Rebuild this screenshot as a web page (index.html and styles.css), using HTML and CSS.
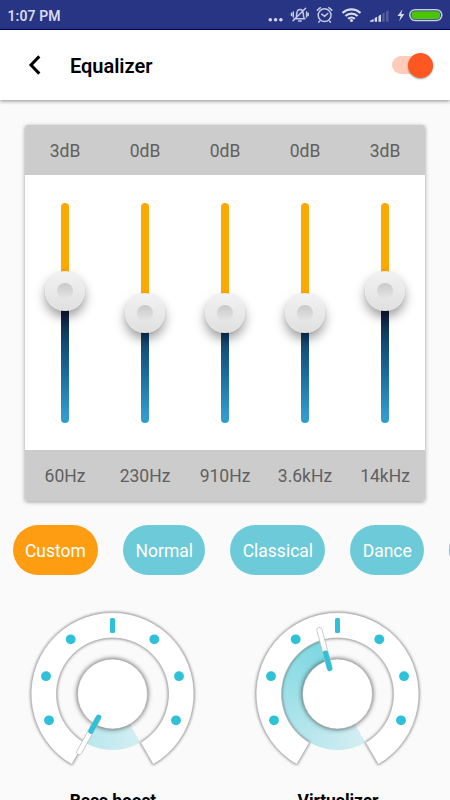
FILE: index.html
```html
<!DOCTYPE html>
<html lang="en">
<head>
<meta charset="utf-8">
<title>Equalizer</title>
<link rel="stylesheet" href="styles.css">
</head>
<body>
<div class="screen">
  <div class="status">
    <span class="time">1:07 PM</span>
    <svg class="status-icons" width="184" height="30" viewBox="266 0 184 30">
      <g fill="#d3d6ea"><circle cx="270.3" cy="19.8" r="1.8"/><circle cx="275.6" cy="19.8" r="1.8"/><circle cx="280.9" cy="19.8" r="1.8"/></g>
      <g fill="none" stroke="#c5c9e5" stroke-width="1.5" stroke-linecap="round">
        <path d="M294.2 18.8h10.8M295.7 18.5c1.1-1.5.8-3.5 1.1-5.4.3-2.3 1.5-3.6 3.2-3.6s3 1.3 3.2 3.6c.2 2 .1 3.9 1.2 5.4M298.6 21h2.6M293 20.7l12.6-12.4M293.3 12v5M306.6 12v5M291.5 13.3v2.3M308.2 13.3v2.3"/>
        <circle cx="324.6" cy="15.2" r="6.4" stroke-width="1.5"/>
        <path d="M321.7 14.2l2.9 2.2 3.2-2.9M317.4 10.2l3-2.5M331.8 10.2l-3-2.5M319.6 21.2l-.8.9M329.6 21.2l.8.9"/>
      </g>
      <g fill="none" stroke="#d7daee" stroke-width="2.2">
        <path d="M342.5 13c5.2-4.9 12.8-4.9 18 0M345.4 16c3.5-3.3 8.7-3.3 12.2 0M348.2 18.9c1.9-1.8 4.7-1.8 6.6 0"/>
      </g>
      <circle cx="351.5" cy="20.6" r="1.5" fill="#d7daee"/>
      <g fill="#dadced"><path d="M370 21.8v-1.1l3.6-1.6v2.7zM374.7 21.8v-3.9l2.4-1.2v5.1zM378.5 21.8v-5.8l2.5-1.4v7.2z"/><path opacity=".25" d="M382.2 21.8v-8.1l2.4-1.4v9.5zM386 21.8v-10.3l2.5-1.4v11.7z"/></g>
      <path d="M402.5 9.3l-5 6.7h3.1l-1.4 5.3 5.2-7.2h-3.2z" fill="#d7daee"/>
      <rect x="409.8" y="9.7" width="32" height="10.8" rx="5.4" fill="none" stroke="#c7cce5" stroke-width="1.5"/>
      <rect x="411.4" y="11.3" width="28.8" height="7.6" rx="3.5" fill="#4bc500"/>
    </svg>
  </div>
  <header class="bar">
    <svg class="back" width="14" height="20" viewBox="0 0 14 20"><path d="M12.3 1.4L4 10l8.3 8.6" fill="none" stroke="#000" stroke-width="3"/></svg>
    <h1>Equalizer</h1>
    <div class="switch"><span class="knob"></span></div>
  </header>
  <main>
    <section class="card">
      <div class="labels"><span>3dB</span><span>0dB</span><span>0dB</span><span>0dB</span><span>3dB</span></div>
      <div class="sliders">
        <div class="slider high"><i class="track"></i><i class="thumb"></i></div>
        <div class="slider"><i class="track"></i><i class="thumb"></i></div>
        <div class="slider"><i class="track"></i><i class="thumb"></i></div>
        <div class="slider"><i class="track"></i><i class="thumb"></i></div>
        <div class="slider high"><i class="track"></i><i class="thumb"></i></div>
      </div>
      <div class="labels"><span>60Hz</span><span>230Hz</span><span>910Hz</span><span>3.6kHz</span><span>14kHz</span></div>
    </section>
    <nav class="chips">
      <span class="chip on">Custom</span><span class="chip">Normal</span><span class="chip">Classical</span><span class="chip">Dance</span><span class="chip next"></span>
    </nav>
    <section class="dials">
      <figure>
        <div class="dial">
          <div class="fan low"></div>
          <svg width="180" height="180" viewBox="-90.5 -90 180 180">
            <defs>
              <g id="face">
                <path class="ring" d="M-40.75 70.58A81.5 81.5 0 1 1 40.75 70.58L28 48.5A56 56 0 1 0-28 48.5Z"/>
                <circle class="hub" r="35"/>
                <g fill="#2fc1d8"><circle cx="-41.8" cy="-54.7" r="4.9"/><circle cx="-66.5" cy="-17.8" r="4.9"/><circle cx="-63.5" cy="26.3" r="4.9"/><circle cx="41.8" cy="-54.7" r="4.9"/><circle cx="66.5" cy="-17.8" r="4.9"/><circle cx="63.5" cy="26.3" r="4.9"/><rect x="-2.5" y="-76" width="5" height="15" rx="1.5"/></g>
              </g>
              <g id="needle">
                <rect class="arm" x="-2.6" y="-1" width="5.2" height="44" rx="2.6"/>
                <rect x="-2.6" y="23" width="5.2" height="21" rx="2" fill="#2fc1d8"/>
              </g>
            </defs>
            <use href="#face"/>
            <use href="#needle" transform="translate(-34 59.5) rotate(209)"/>
          </svg>
        </div>
        <figcaption>Bass boost</figcaption>
      </figure>
      <figure>
        <div class="dial">
          <div class="fan mid"></div>
          <svg width="180" height="180" viewBox="-90.5 -90 180 180">
            <use href="#face"/>
            <use href="#needle" transform="translate(-18.5 -65.5) rotate(-15)"/>
          </svg>
        </div>
        <figcaption>Virtualizer</figcaption>
      </figure>
    </section>
  </main>
</div>
</body>
</html>
```
FILE: styles.css
```css
* { box-sizing: border-box; }
body { margin: 0; background: #fafafa; font-family: Roboto, sans-serif; }
.screen { width: 450px; height: 800px; overflow: hidden; }
.status { height: 30px; display: flex; justify-content: space-between; align-items: center; background: #273584; border-bottom: 1px solid #00006b; color: #d7daee; }
.time { padding: 2px 0 0 7.5px; font-size: 14px; font-weight: 600; letter-spacing: .1px; }
.status-icons { display: block; }
.bar { height: 70px; display: flex; align-items: center; background: #fff; box-shadow: 0 1px 4px rgba(0,0,0,.45); padding: 0 17px 0 27px; }
.back { display: block; }
h1 { margin: 2px auto 0 29px; font-size: 20px; line-height: 24px; font-weight: 600; letter-spacing: -.03px; color: #000; }
.switch { width: 41px; height: 18px; border-radius: 9px; background: #ffccbc; display: flex; justify-content: flex-end; align-items: center; }
.knob { flex: none; width: 25px; height: 25px; border-radius: 50%; background: #ff5722; box-shadow: 0 1px 2px rgba(0,0,0,.4); }
.card { width: 400px; height: 376px; margin: 25px auto 0; border-radius: 2.5px; overflow: hidden; background: #fff; box-shadow: 0 1px 4px rgba(0,0,0,.38); }
.labels { height: 50px; display: grid; grid-template-columns: repeat(5, 1fr); align-items: center; text-align: center; background: #ccc; color: #606060; font-size: 17.5px; padding-top: 2px; }
.labels:last-child { height: 51px; padding-top: 0; }
.sliders { height: 275px; padding-top: 27.5px; display: grid; grid-template-columns: repeat(5, 1fr); }
.slider { --pos: 110px; position: relative; height: 220px; display: flex; justify-content: center; }
.high { --pos: 88px; }
.track { width: 7.6px; height: 220px; border-radius: 4px; background: linear-gradient(#ffa800 var(--pos), transparent var(--pos)), linear-gradient(#0c1330 46%, #11294b 54%, #124b73 64%, #1c6f9e 79%, #3299cc 96%); }
.thumb { position: absolute; left: calc(50% - 20px); top: calc(var(--pos) - 19.5px); width: 40px; height: 40px; border-radius: 50%; background: linear-gradient(#f2f2f2, #e0e0e0); box-shadow: 0 6px 11px rgba(0,0,0,.38), 0 0 1px rgba(0,0,0,.12); display: grid; place-items: center; }
.thumb::after { content: ""; width: 16px; height: 16px; border-radius: 50%; background: linear-gradient(#c9c9c9, #e5e5e5); }
.chips { display: flex; gap: 25px; margin: 24px 0 0 12.7px; }
.chip { flex: none; height: 50px; line-height: 52px; padding: 0 12.3px; border-radius: 25px; background: #6dcad9; color: #fff; font-size: 17.5px; }
.on { background: #ff9d12; }
.next { width: 70px; }
.dials { display: grid; grid-template-columns: 225px 225px; margin-top: 28.6px; }
figure { margin: 0; display: flex; flex-direction: column; align-items: center; }
.dial { display: grid; place-items: center; width: 180px; height: 180px; margin-left: -1px; }
.dial > * { grid-area: 1 / 1; }
.dial svg { display: block; overflow: visible; position: relative; }
.fan { width: 112px; height: 112px; border-radius: 50%; transform: translateX(.5px); }
.low { background: conic-gradient(from 150deg, #d3eef2, #b9e7ed 60deg, transparent 60deg); }
.mid { background: conic-gradient(from 150deg, #d3eef2, #b9e7ed 60deg, #7dd7e1 194deg, transparent 194deg); }
.ring { fill: #fff; stroke: #b5b5b5; stroke-width: .8; filter: drop-shadow(0 0 1.5px rgba(0,0,0,.5)); }
.hub { fill: #fff; stroke: #aaa; stroke-width: .6; filter: drop-shadow(0 .5px 2.5px rgba(0,0,0,.65)); }
.arm { fill: #fff; stroke: #bbb; stroke-width: .7; }
figcaption { margin: 5px 0 0 1px; font-size: 17.5px; line-height: 24px; font-weight: 700; color: #000; letter-spacing: -.1px; }
```
